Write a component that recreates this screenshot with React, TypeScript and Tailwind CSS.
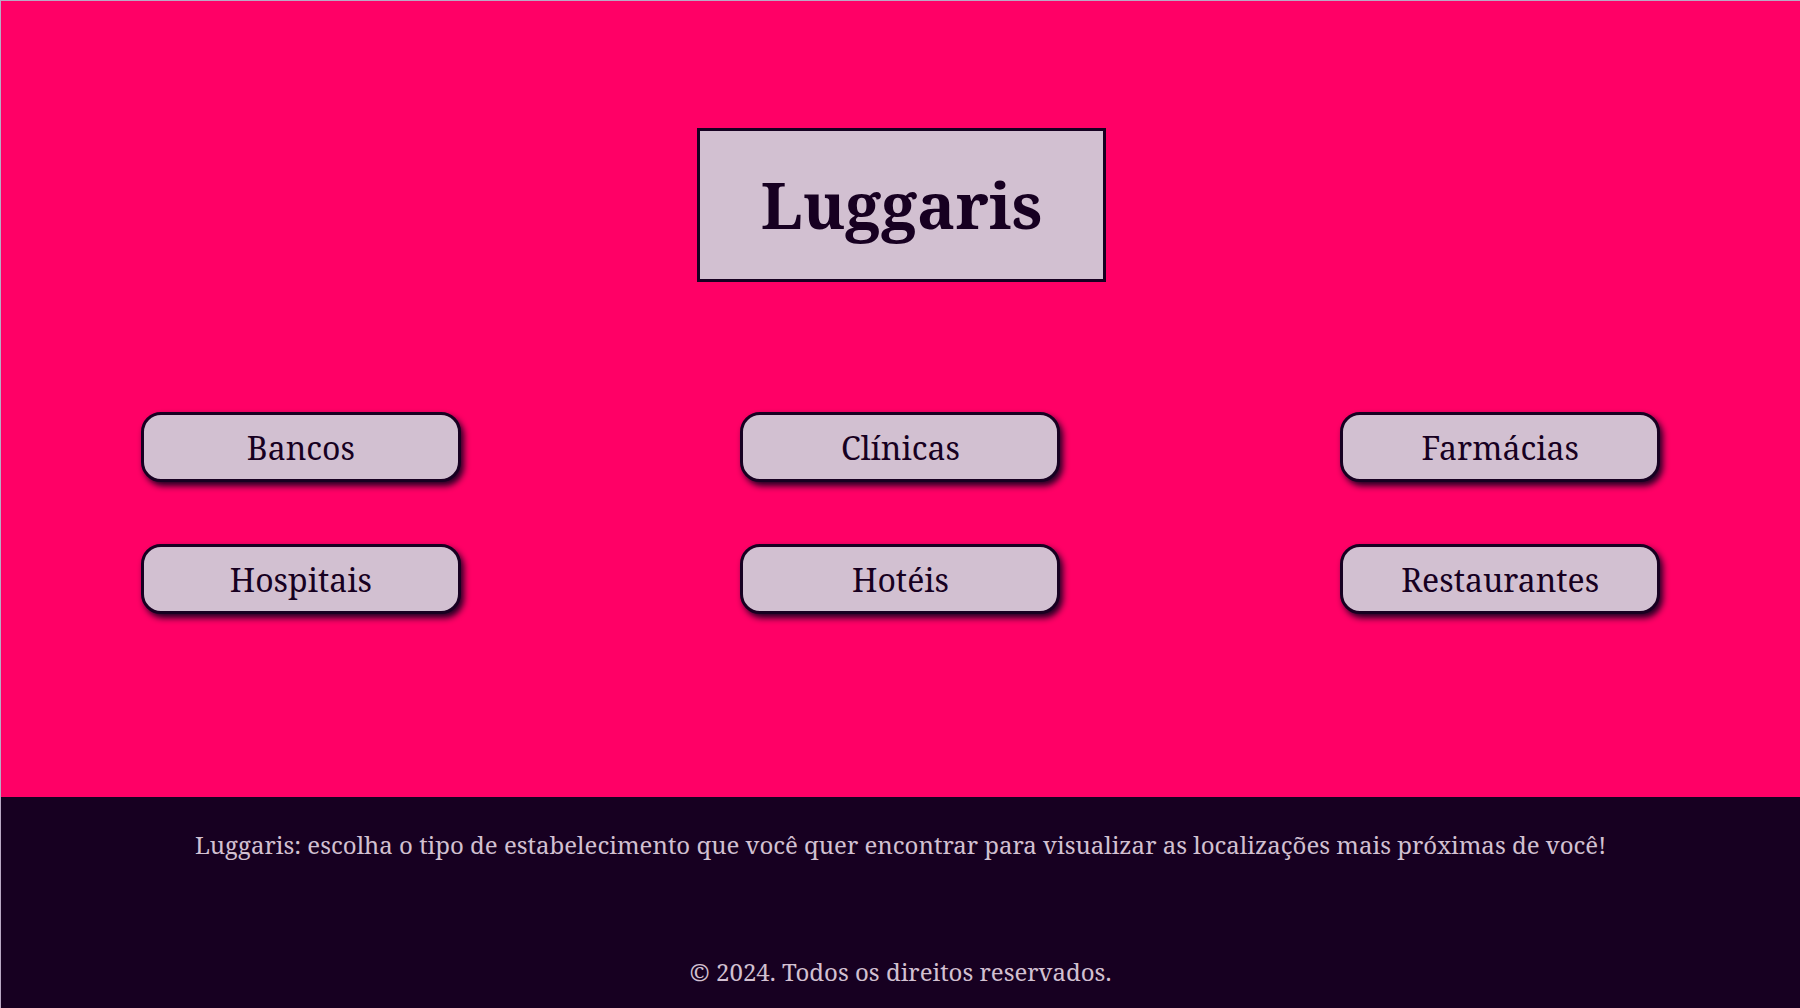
import React from 'react';

const places = ['Bancos', 'Clínicas', 'Farmácias', 'Hospitais', 'Hotéis', 'Restaurantes'];

const serif = "font-['Noto_Serif','DejaVu_Serif',serif]";

export default function App() {
  return (
    <div className={`min-h-screen w-full bg-[#ff0066] ${serif} border-t border-l border-[#b9a8c4]`}>
      {/* topo */}
      <main className="h-[796px] flex flex-col items-center pt-[127px]">
        <div className="ml-[2px] w-[409px] h-[154px] border-[3px] border-[#170021] bg-[#d2c0d1] flex items-center justify-center">
          <h1 className="text-[64px] font-bold text-[#170021] leading-none">Luggaris</h1>
        </div>

        <div className="mt-[130px] w-full grid grid-cols-3 gap-y-[62px]">
          {places.map((p) => (
            <div key={p} className="flex justify-center">
              <button className="w-[320px] h-[70px] pt-[2px] rounded-[20px] border-[3px] border-[#170021] bg-[#d2c0d1] text-[#170021] text-[32px] shadow-[3px_4px_6px_rgba(23,0,33,0.95)] flex items-center justify-center">
                {p}
              </button>
            </div>
          ))}
        </div>
      </main>

      {/* rodapé */}
      <footer className="bg-[#170021] h-[212px] flex flex-col items-center text-[#d2c0d1] text-[24px] leading-[36px]">
        <p className="mt-[30px]">
          Luggaris: escolha o tipo de estabelecimento que você quer encontrar para visualizar as localizações mais próximas de você!
        </p>
        <p className="mt-[91px]">© 2024. Todos os direitos reservados.</p>
      </footer>
    </div>
  );
}
